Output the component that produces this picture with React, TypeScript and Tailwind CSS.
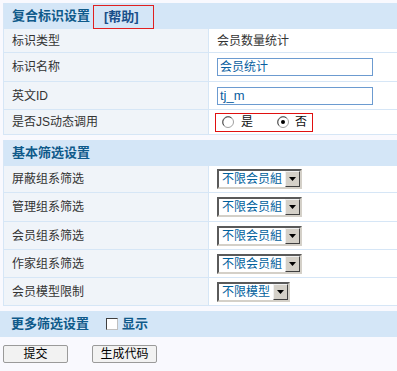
import React from "react";

const FONT = '"Liberation Sans", "Noto Sans CJK SC", sans-serif';

function Row({ label, h, children }: { label: string; h: string; children?: React.ReactNode }) {
  return (
    <div className={`flex ${h} border-b border-[#d6e6f6]`}>
      <div className="w-[205px] shrink-0 bg-[#f0f4f9] border-r border-[#d6e6f6] pl-[8px] flex items-center text-[12px] text-[#333]">
        {label}
      </div>
      <div className="flex-1 bg-white pl-[8px] flex items-center text-[12px] text-[#333]">{children}</div>
    </div>
  );
}

function Select({ text, w }: { text: string; w: string }) {
  return (
    <div className={`${w} h-[20px] flex border-2 border-t-[#5a5a5a] border-l-[#5a5a5a] border-b-[#d4d0c8] border-r-[#d4d0c8] bg-white`}>
      <div className="flex-1 pl-[3px] text-[12px] leading-[16px] text-[#00609c]">{text}</div>
      <div className="w-[15px] h-[16px] bg-[#d4d0c8] border border-t-[#f0f0f0] border-l-[#f0f0f0] border-b-[#404040] border-r-[#404040] flex items-center justify-center">
        <svg width="7" height="4" viewBox="0 0 7 4">
          <path d="M0 0h7L3.5 4z" fill="#000" />
        </svg>
      </div>
    </div>
  );
}

function Radio({ checked }: { checked?: boolean }) {
  return (
    <svg width="12" height="12" viewBox="0 0 12 12">
      <circle cx="6" cy="6" r="5.5" fill="#fff" stroke="#a0a0a0" />
      <path d="M2 9.5A5 5 0 0 1 2.5 2.5A5 5 0 0 1 9.5 2" fill="none" stroke="#505050" />
      {checked && <circle cx="6" cy="6" r="2" fill="#000" />}
    </svg>
  );
}

function Header({ children }: { children: React.ReactNode }) {
  return (
    <div className="h-[26px] bg-[#d4e6f7] flex items-center pl-[8px] text-[13px] font-bold text-[#0f5a8a]">
      {children}
    </div>
  );
}

export default function App() {
  return (
    <div className="w-[397px] h-[371px] overflow-hidden bg-[#f9f9fe] pt-[3px] pl-[3px]" style={{ fontFamily: FONT }}>
      <div className="w-[420px] border-l border-[#d6e6f6]">
        <div className="h-[26px] bg-[#d4e6f7] flex items-stretch pl-[8px] text-[13px] font-bold text-[#0f5a8a]">
          <div className="flex items-center">复合标识设置</div>
          <div className="ml-[3px] mt-[2px] w-[61px] border border-[#e02020] flex items-center pl-[10px] text-[#1a4f8a]">[帮助]</div>
        </div>
        <Row label="标识类型" h="h-[24px]">会员数量统计</Row>
        <Row label="标识名称" h="h-[29px]">
          <div className="w-[156px] h-[18px] border border-[#6c9bd0] bg-white pl-[2px] text-[12px] leading-[16px] text-[#0a5ea0]">会员统计</div>
        </Row>
        <Row label="英文ID" h="h-[28px]">
          <div className="w-[156px] h-[18px] border border-[#6c9bd0] bg-white pl-[2px] text-[13px] leading-[16px] text-[#0a5ea0]">tj_m</div>
        </Row>
        <Row label="是否JS动态调用" h="h-[25px]">
          <div className="ml-[-2px] w-[98px] h-[19px] border border-[#e01010] flex items-center pl-[6px] text-[12px] text-[#111]">
            <Radio />
            <span className="ml-[7px]">是</span>
            <span className="ml-[24px]"><Radio checked /></span>
            <span className="ml-[6px]">否</span>
          </div>
        </Row>
      </div>

      <div className="w-[420px] border-l border-[#d6e6f6] mt-[5px]">
        <Header>基本筛选设置</Header>
        <Row label="屏蔽组系筛选" h="h-[27px]"><Select text="不限会员組" w="w-[85px]" /></Row>
        <Row label="管理组系筛选" h="h-[29px]"><Select text="不限会员組" w="w-[85px]" /></Row>
        <Row label="会员组系筛选" h="h-[28px]"><Select text="不限会员組" w="w-[85px]" /></Row>
        <Row label="作家组系筛选" h="h-[28px]"><Select text="不限会员組" w="w-[85px]" /></Row>
        <Row label="会员模型限制" h="h-[28px]"><Select text="不限模型" w="w-[73px]" /></Row>
      </div>

      <div className="w-[420px] mt-[5px] ml-[-3px] pl-[3px] bg-[#d4e6f7]">
        <Header>
          <span>更多筛选设置</span>
          <span className="ml-[17px] w-[12px] h-[12px] bg-white border border-t-[#404040] border-l-[#404040] border-b-[#c0c0c0] border-r-[#c0c0c0]" />
          <span className="ml-[4px]">显示</span>
        </Header>
      </div>

      <div className="flex mt-[8px] gap-[24px]">
        <button className="w-[65px] h-[18px] bg-[#f2f2f2] border border-[#9a9a9a] rounded-[2px] text-[12px] leading-[16px] text-black" style={{ fontFamily: FONT }}>提交</button>
        <button className="w-[65px] h-[18px] bg-[#f2f2f2] border border-[#9a9a9a] rounded-[2px] text-[12px] leading-[16px] text-black" style={{ fontFamily: FONT }}>生成代码</button>
      </div>
    </div>
  );
}
